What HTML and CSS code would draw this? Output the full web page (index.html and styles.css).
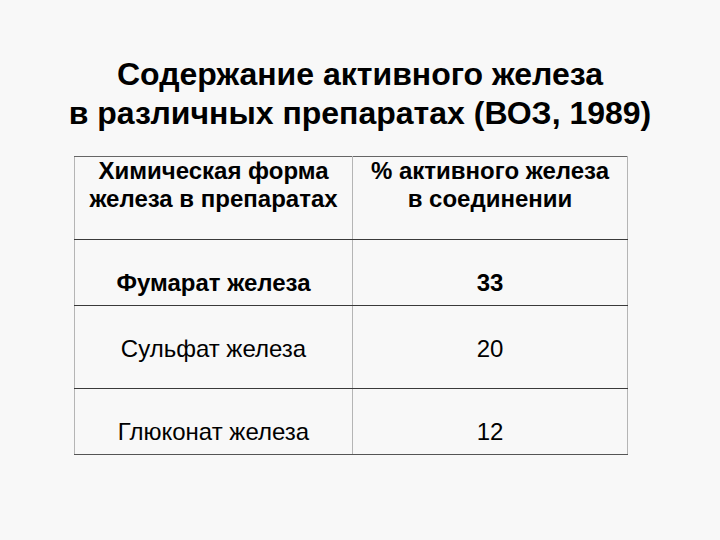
FILE: index.html
```html
<!DOCTYPE html>
<html lang="ru">
<head>
<meta charset="utf-8">
<title>Содержание активного железа</title>
<link rel="stylesheet" href="styles.css">
</head>
<body>
<div class="slide">
  <h1 class="title">Содержание активного железа<br>в различных препаратах (ВОЗ, 1989)</h1>
  <table class="iron">
    <tr class="head">
      <th class="c1">Химическая форма<br>железа в препаратах</th>
      <th class="c2">% активного железа<br>в соединении</th>
    </tr>
    <tr class="short bold">
      <td>Фумарат железа</td>
      <td>33</td>
    </tr>
    <tr class="tall">
      <td>Сульфат железа</td>
      <td>20</td>
    </tr>
    <tr class="short last">
      <td>Глюконат железа</td>
      <td>12</td>
    </tr>
  </table>
</div>
</body>
</html>
```
FILE: styles.css
```css
html, body {
  margin: 0;
  padding: 0;
  background: #f8f8f8;
}
.slide {
  width: 720px;
  height: 540px;
  display: flex;
  flex-direction: column;
  align-items: center;
  font-family: "Liberation Sans", Arial, sans-serif;
  color: #000;
}
.title {
  margin: 55px 0 0 0;
  font-size: 32px;
  line-height: 39px;
  font-weight: bold;
  text-align: center;
}
.iron {
  align-self: flex-start;
  margin: 23px 0 0 74px;
  border-collapse: collapse;
  table-layout: fixed;
  width: 554px;
}
.iron th, .iron td {
  padding: 0;
  text-align: center;
  vertical-align: top;
  border-left: 1px solid #b5b5b5;
  border-right: 1px solid #b5b5b5;
  border-bottom: 1px solid #3a3a3a;
  box-sizing: border-box;
}
.iron .c1 { width: 278px; }
.iron .c2 { width: 275px; }
.iron th + th, .iron td + td {
  border-left: 1px solid #2a2a2a;
}
.head th {
  border-top: 1px solid #666;
  height: 83px;
  font-size: 24px;
  line-height: 28px;
  font-weight: bold;
  padding-top: 0;
}
.iron td {
  font-size: 24px;
  line-height: 28px;
  font-weight: normal;
}
.short td {
  height: 66px;
  padding-top: 29px;
}
.tall td {
  height: 83px;
  padding-top: 29px;
}
.bold td { font-weight: bold; }
.last td { border-bottom: 1px solid #555; }
```
